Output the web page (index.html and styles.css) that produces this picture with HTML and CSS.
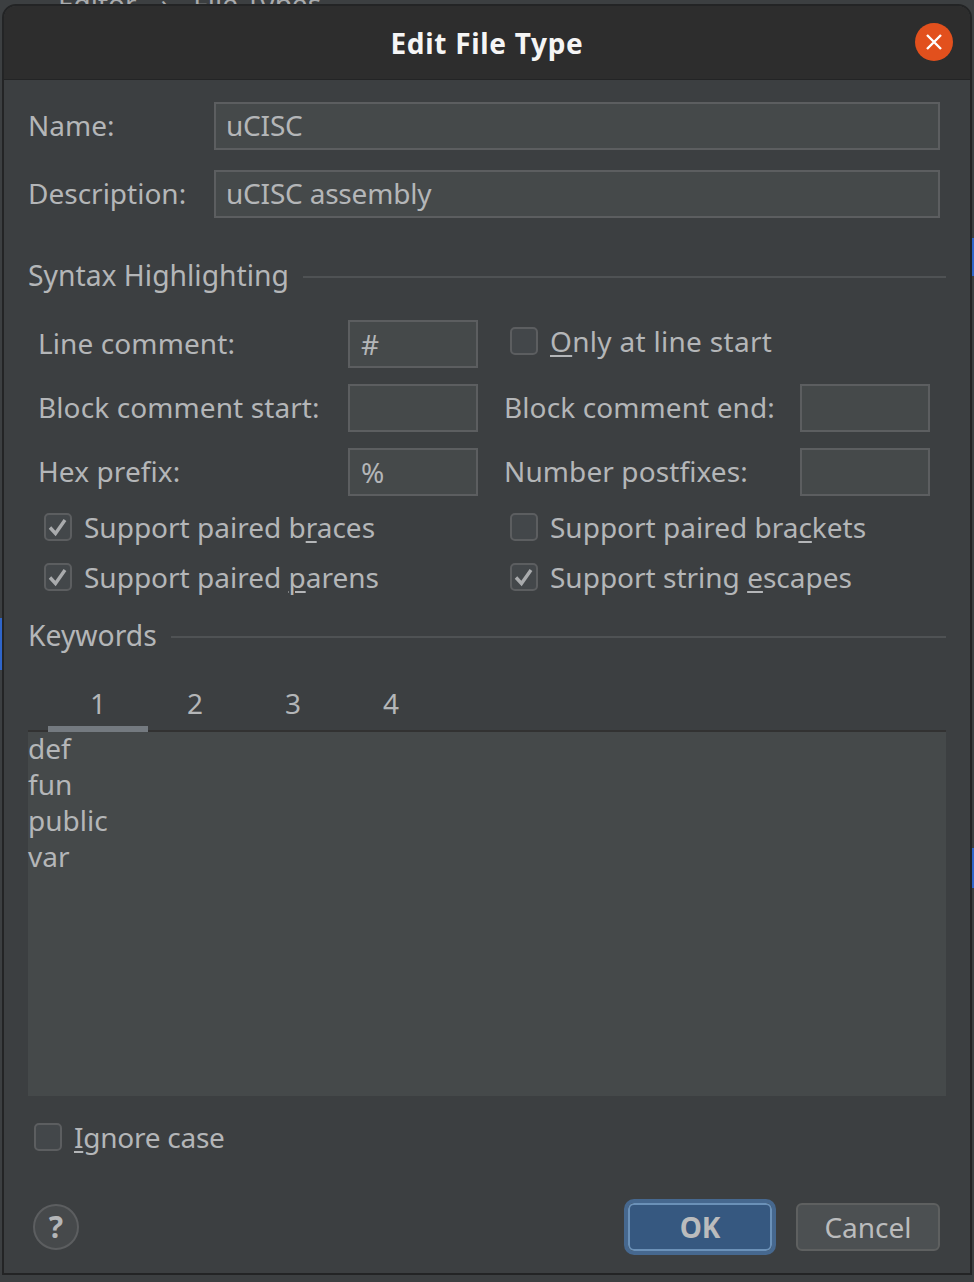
FILE: index.html

```html
<!DOCTYPE html>
<html>

<head>
    <meta charset="utf-8">
    <title>Edit File Type</title>
    <link rel="stylesheet" href="styles.css">
</head>

<body>
    <div class="backdrop">
        <div class="crumbs">
            <span>Editor</span>
            <span class="crumb-sep">›</span>
            <span>File Types</span>
        </div>
        <span class="edge edge-a"></span>
        <span class="edge edge-b"></span>
        <span class="edge edge-c"></span>
    </div>

    <div class="dialog">
        <div class="titlebar">
            <h1>Edit File Type</h1>
            <span class="close">
                <svg width="18" height="18" viewBox="0 0 18 18"><path d="M2 2L16 16M16 2L2 16" stroke="#fff" stroke-width="2.4"/></svg>
            </span>
        </div>

        <div class="content">
            <div class="name-row">
                <label>Name:</label>
                <div class="field wide">uCISC</div>
            </div>
            <div class="name-row">
                <label>Description:</label>
                <div class="field wide">uCISC assembly</div>
            </div>

            <div class="section syntax-title">
                <span>Syntax Highlighting</span>
                <i></i>
            </div>

            <div class="syntax-grid">
                <label>Line comment:</label>
                <div class="field small">#</div>
                <div class="check only"><span class="box"></span><span><u>O</u>nly at line start</span></div>

                <label>Block comment start:</label>
                <div class="field small"></div>
                <label class="right-label">Block comment end:</label>
                <div class="field small"></div>

                <label>Hex prefix:</label>
                <div class="field small">%</div>
                <label class="right-label">Number postfixes:</label>
                <div class="field small"></div>
            </div>

            <div class="checks">
                <div class="check">
                    <span class="box"><svg width="24" height="24" viewBox="0 0 24 24"><path d="M4 12.5L9.5 18.5L19 5" fill="none" stroke="#a9abad" stroke-width="3.4"/></svg></span>
                    <span>Support paired b<u>r</u>aces</span>
                </div>
                <div class="check">
                    <span class="box"></span>
                    <span>Support paired bra<u>c</u>kets</span>
                </div>
                <div class="check">
                    <span class="box"><svg width="24" height="24" viewBox="0 0 24 24"><path d="M4 12.5L9.5 18.5L19 5" fill="none" stroke="#a9abad" stroke-width="3.4"/></svg></span>
                    <span>Support paired <u>p</u>arens</span>
                </div>
                <div class="check">
                    <span class="box"><svg width="24" height="24" viewBox="0 0 24 24"><path d="M4 12.5L9.5 18.5L19 5" fill="none" stroke="#a9abad" stroke-width="3.4"/></svg></span>
                    <span>Support string <u>e</u>scapes</span>
                </div>
            </div>

            <div class="section keywords-title">
                <span>Keywords</span>
                <i></i>
            </div>

            <div class="tabs">
                <span class="tab active">1</span>
                <span class="tab">2</span>
                <span class="tab">3</span>
                <span class="tab">4</span>
            </div>
            <div class="keywords">
                <div class="keyword-list">def<br>fun<br>public<br>var</div>
            </div>

            <div class="check ignore"><span class="box"></span><span><u>I</u>gnore case</span></div>

            <div class="footer">
                <span class="help">?</span>
                <div class="buttons">
                    <button class="ok" type="button">OK</button>
                    <button class="cancel" type="button">Cancel</button>
                </div>
            </div>
        </div>
    </div>
</body>

</html>
```

FILE: styles.css

```css
html, body {
  margin: 0;
  height: 100%;
}

body {
  /* Window behind the dialog */
  position: relative;
  width: 974px;
  height: 1282px;
  overflow: hidden;
  background: #3c3f41;
  font: 28px "Noto Sans", "Open Sans", sans-serif;
  color: #b4b6b8;
}

u {
  text-underline-offset: 3px;
  text-decoration-thickness: 2px;
}

.crumbs {
  position: absolute;
  left: 58px;
  top: -16px;
  display: flex;
  gap: 24px;
  color: #a9abad;
}

.edge {
  position: absolute;
  right: 0;
  width: 2px;
  background: #2f65ca;
}

.edge-a {
  top: 238px;
  height: 38px;
}

.edge-b {
  top: 848px;
  height: 40px;
}

.edge-c {
  left: 0;
  top: 618px;
  height: 52px;
}

.dialog {
  position: absolute;
  left: 2px;
  top: 4px;
  width: 966px;
  height: 1267px;
  border: 2px solid #232425;
  border-radius: 14px 14px 0 0;
  overflow: hidden;
  background: #3c3f41;
}

.titlebar {
  position: relative;
  height: 73px;
  border-bottom: 1px solid #232425;
  background: #2d2d2d;
  display: flex;
  align-items: center;
  justify-content: center;
}

h1 {
  margin: 0;
  font-size: 28px;
  font-weight: 700;
  color: #f5f5f5;
  letter-spacing: .7px;
}

.close {
  position: absolute;
  right: 17px;
  top: 17px;
  width: 38px;
  height: 38px;
  border-radius: 50%;
  background: #e2501d;
  display: flex;
  align-items: center;
  justify-content: center;
}

.content {
  padding: 22px 24px 0 24px;
}

.name-row {
  display: flex;
  align-items: center;
  height: 48px;
  margin-bottom: 20px;
}

.name-row label {
  width: 186px;
  padding-bottom: 2px;
}

.field {
  box-sizing: border-box;
  height: 48px;
  line-height: 44px;
  padding-left: 11px;
  border: 2px solid #5c5e60;
  background: #45494a;
}

.wide {
  width: 726px;
  line-height: 42px;
  padding-left: 10px;
  letter-spacing: -.2px;
}

.small {
  width: 130px;
}

.section {
  display: flex;
  align-items: center;
  gap: 14px;
}

.section span {
  font-size: 28.3px;
}

.section i {
  flex: 1;
  height: 2px;
  margin-top: 4px;
  background: #4f5254;
}

.syntax-title {
  margin-top: 37px;
  height: 40px;
}

.syntax-grid {
  display: grid;
  grid-template-columns: 310px 130px 26px 296px 130px;
  grid-auto-rows: 48px;
  row-gap: 16px;
  align-items: center;
  margin-top: 25px;
  padding-left: 10px;
}

.syntax-grid label {
  padding-bottom: 2px;
  letter-spacing: .1px;
}

.right-label {
  grid-column: 4;
}

.only {
  grid-column: 4 / 6;
  margin-left: 6px;
  margin-top: -6px;
  letter-spacing: .3px;
}

.check {
  display: flex;
  align-items: center;
  gap: 12px;
}

.box {
  box-sizing: border-box;
  flex: none;
  width: 28px;
  height: 28px;
  border: 2px solid #5c5e60;
  border-radius: 5px;
  background: #43474a;
  display: flex;
  align-items: center;
  justify-content: center;
}

.checks {
  display: grid;
  grid-template-columns: 466px 1fr;
  grid-auto-rows: 50px;
  margin-top: 6px;
  padding-left: 16px;
}

.keywords-title {
  margin-top: 13px;
  height: 40px;
}

.tabs {
  display: flex;
  margin-top: 27px;
  padding-left: 20px;
  height: 48px;
  position: relative;
  z-index: 1;
}

.tab {
  width: 98px;
  height: 48px;
  line-height: 42px;
  text-align: center;
}

.tab.active {
  box-sizing: border-box;
  width: 100px;
  height: 50px;
  margin-right: -2px;
  border-bottom: 6px solid #747a80;
}

.keywords {
  height: 364px;
  border-top: 2px solid #323232;
  background: #45494a;
  line-height: 36px;
}

.keyword-list {
  margin-top: -2px;
}

.ignore {
  margin: 27px 0 0 6px;
  height: 28px;
  letter-spacing: -.25px;
}

.footer {
  display: flex;
  align-items: center;
  justify-content: space-between;
  margin-top: 52px;
  padding-left: 5px;
  padding-right: 6px;
}

.help {
  box-sizing: border-box;
  width: 46px;
  height: 46px;
  border: 2px solid #5c5e60;
  border-radius: 50%;
  background: #46494b;
  font-weight: 700;
  font-size: 30px;
  line-height: 41px;
  text-align: center;
}

.buttons {
  display: flex;
  align-items: center;
  gap: 24px;
}

button {
  box-sizing: border-box;
  width: 144px;
  height: 48px;
  border-radius: 6px;
  font: inherit;
  color: #bbbcbd;
  padding: 0;
}

.ok {
  border: 2px solid #6b91b8;
  outline: 4px solid #46688f;
  background: #365880;
  font-weight: 700;
}

.cancel {
  border: 2px solid #5e6060;
  background: #4c5052;
}
```
